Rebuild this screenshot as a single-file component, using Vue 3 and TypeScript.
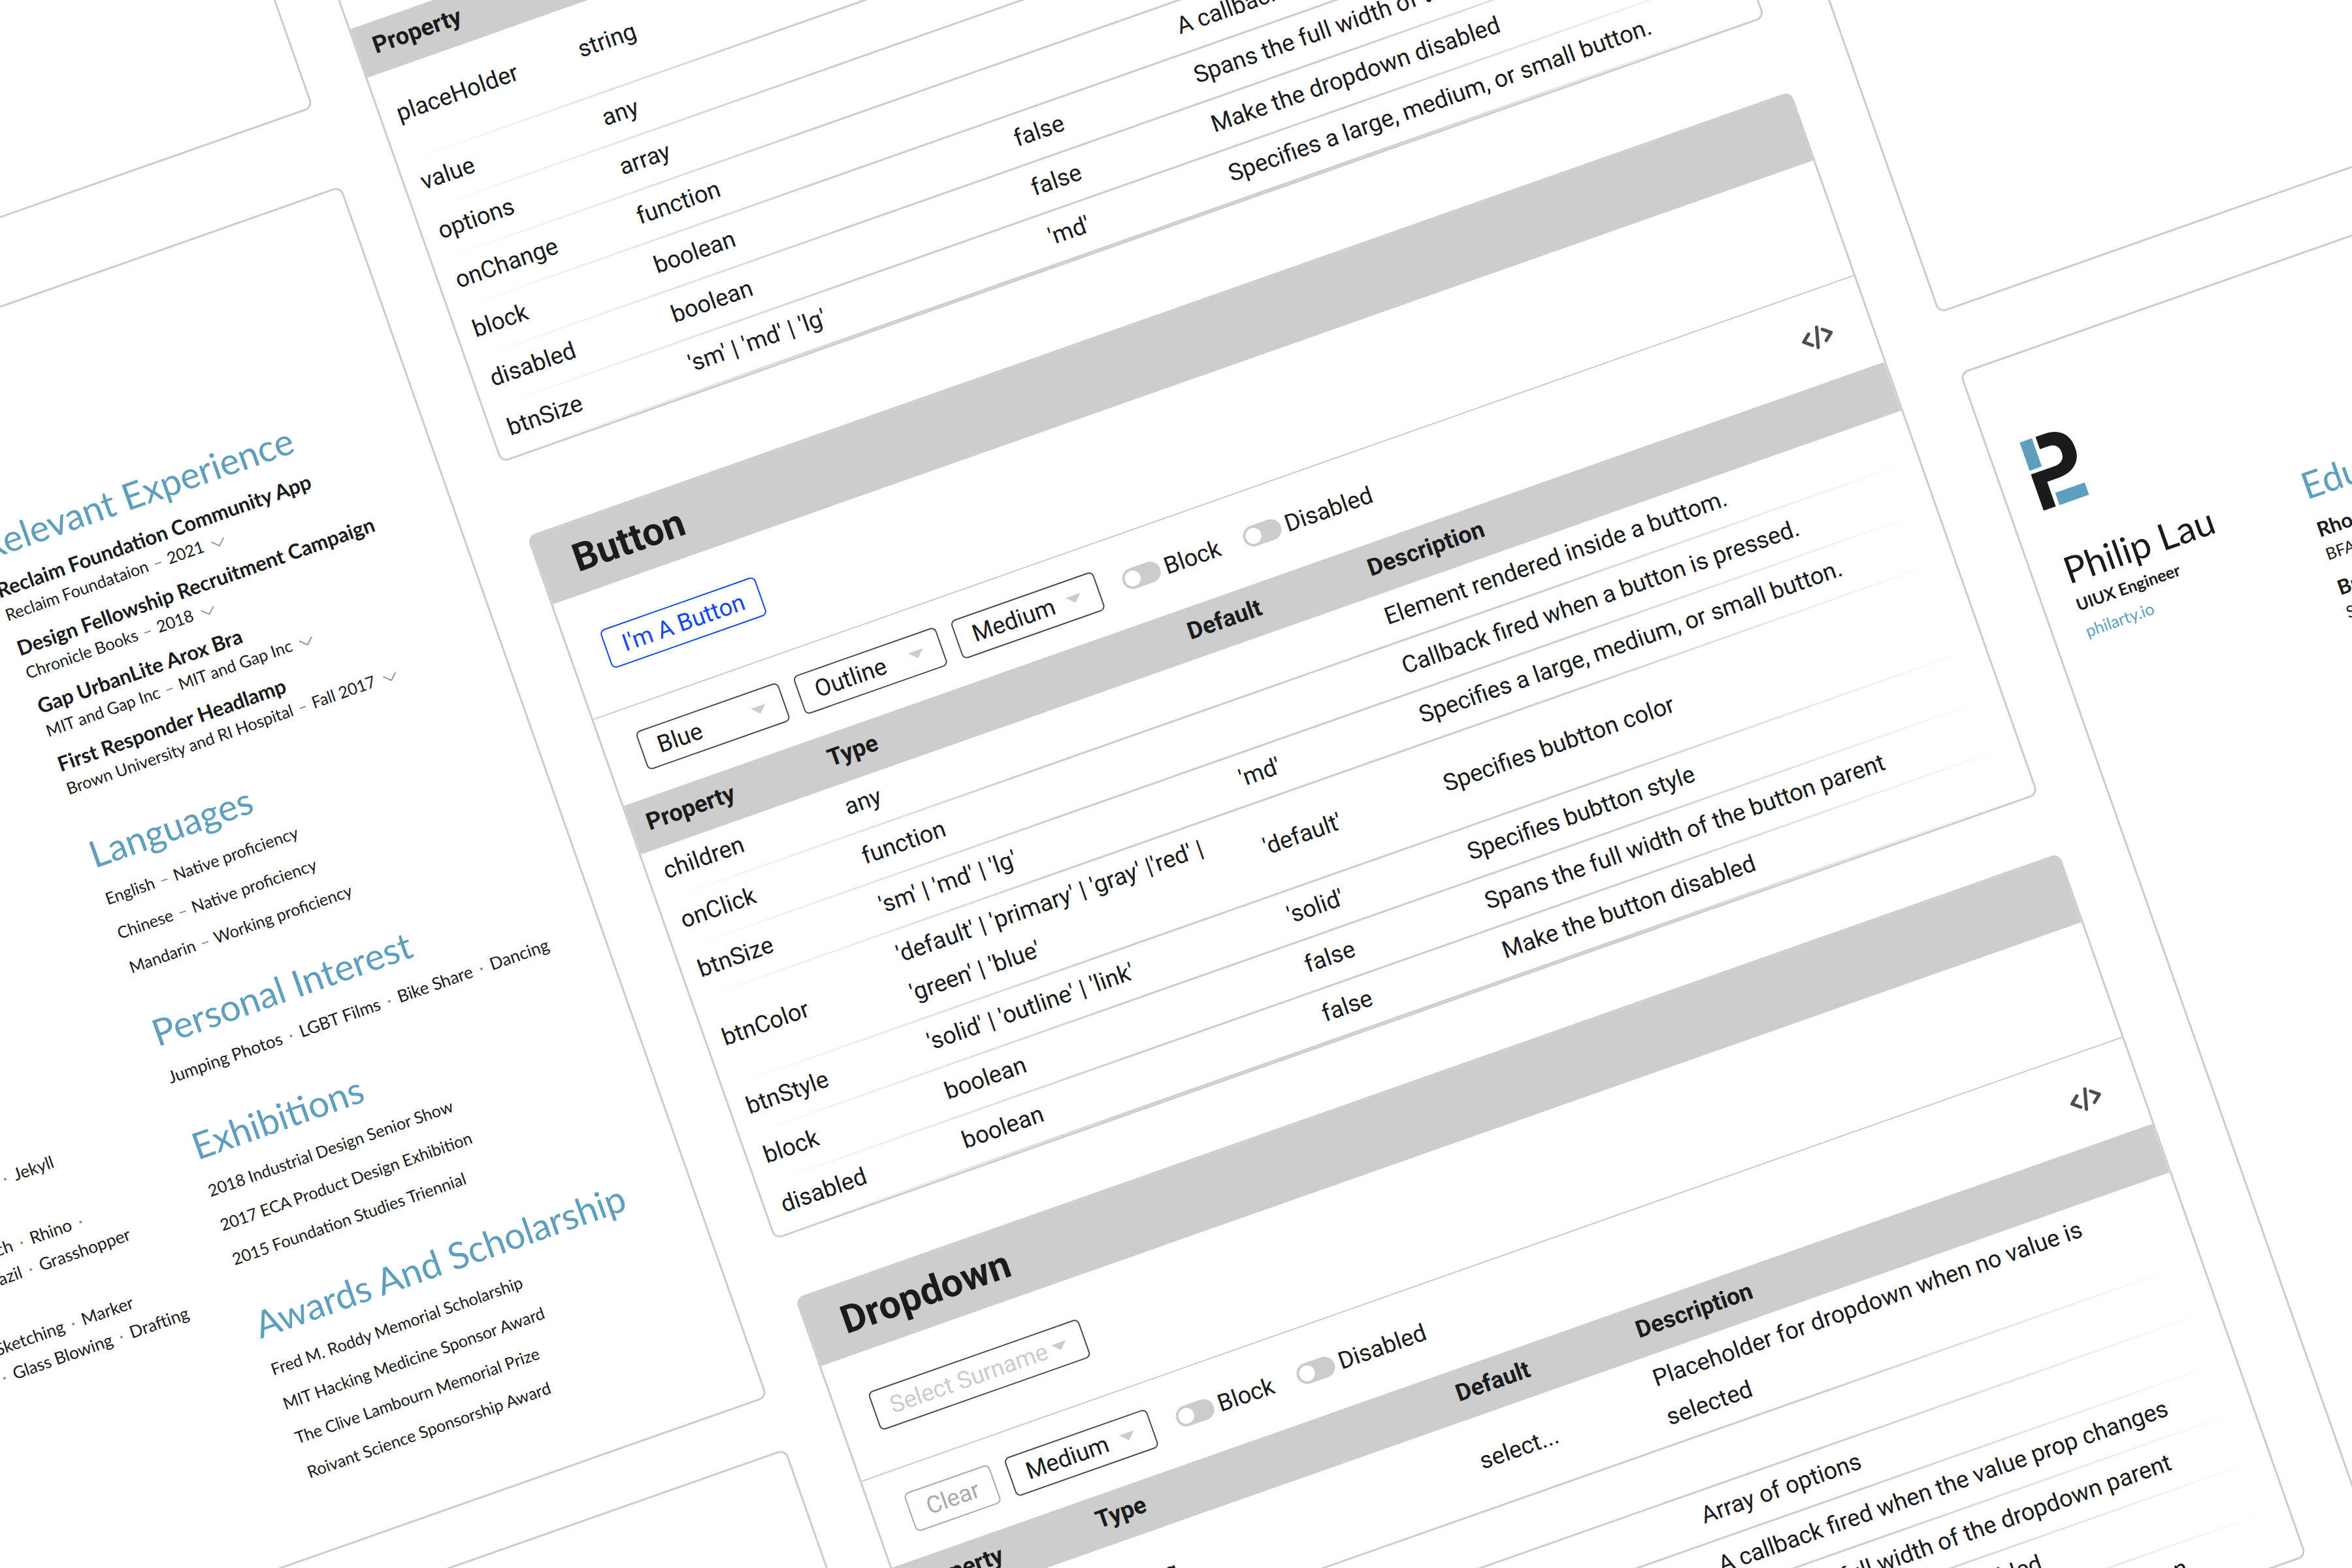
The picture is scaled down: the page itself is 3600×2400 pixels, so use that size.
<script setup lang="ts">
interface PropRow {
  name: string
  type: string
  initial: string
  description: string
}

interface ComponentDoc {
  key: string
  title: string
  demo: 'button' | 'dropdown'
  selects: string[]
  clearable: boolean
  rows: PropRow[]
}

interface Job {
  title: string
  org: string
  date: string
}

const dropdownRows: PropRow[] = [
  { name: 'placeHolder', type: 'string', initial: 'select...', description: 'Placeholder for dropdown when no value is selected' },
  { name: 'value', type: 'any', initial: '', description: '' },
  { name: 'options', type: 'array', initial: '', description: 'Array of options' },
  { name: 'onChange', type: 'function', initial: '', description: 'A callback fired when the value prop changes' },
  { name: 'block', type: 'boolean', initial: 'false', description: 'Spans the full width of the dropdown parent' },
  { name: 'disabled', type: 'boolean', initial: 'false', description: 'Make the dropdown disabled' },
  { name: 'btnSize', type: "'sm' | 'md' | 'lg'", initial: "'md'", description: 'Specifies a large, medium, or small button.' },
]

const buttonRows: PropRow[] = [
  { name: 'children', type: 'any', initial: '', description: 'Element rendered inside a buttom.' },
  { name: 'onClick', type: 'function', initial: '', description: 'Callback fired when a button is pressed.' },
  { name: 'btnSize', type: "'sm' | 'md' | 'lg'", initial: "'md'", description: 'Specifies a large, medium, or small button.' },
  { name: 'btnColor', type: "'default' | 'primary' | 'gray' |'red' | 'green' | 'blue'", initial: "'default'", description: 'Specifies bubtton color' },
  { name: 'btnStyle', type: "'solid' | 'outline' | 'link'", initial: "'solid'", description: 'Specifies bubtton style' },
  { name: 'block', type: 'boolean', initial: 'false', description: 'Spans the full width of the button parent' },
  { name: 'disabled', type: 'boolean', initial: 'false', description: 'Make the button disabled' },
]

const docs: ComponentDoc[] = [
  { key: 'first', title: 'Dropdown', demo: 'dropdown', selects: ['Medium'], clearable: true, rows: dropdownRows },
  { key: 'second', title: 'Button', demo: 'button', selects: ['Blue', 'Outline', 'Medium'], clearable: false, rows: buttonRows },
  { key: 'third', title: 'Dropdown', demo: 'dropdown', selects: ['Medium'], clearable: true, rows: dropdownRows },
]

const jobs: Job[] = [
  { title: 'Reclaim Foundation Community App', org: 'Reclaim Foundataion', date: '2021' },
  { title: 'Design Fellowship Recruitment Campaign', org: 'Chronicle Books', date: '2018' },
  { title: 'Gap UrbanLite Arox Bra', org: 'MIT and Gap Inc', date: 'MIT and Gap Inc' },
  { title: 'First Responder Headlamp', org: 'Brown University and RI Hospital', date: 'Fall 2017' },
]

const languages = [
  { name: 'English', level: 'Native proficiency' },
  { name: 'Chinese', level: 'Native proficiency' },
  { name: 'Mandarin', level: 'Working proficiency' },
]

const interests = ['Jumping Photos', 'LGBT Films', 'Bike Share', 'Dancing']

const exhibitions = [
  '2018 Industrial Design Senior Show',
  '2017 ECA Product Design Exhibition',
  '2015 Foundation Studies Triennial',
]

const awards = [
  'Fred M. Roddy Memorial Scholarship',
  'MIT Hacking Medicine Sponsor Award',
  'The Clive Lambourn Memorial Prize',
  'Roivant Science Sponsorship Award',
]

/* rest: free space left at the end of each ragged line */
const skills = [
  [{ words: ['', 'Jekyll'], rest: 117 }],
  [
    { words: ['Sketch', 'Rhino', ''], rest: 94 },
    { words: ['Brazil', 'Grasshopper'], rest: 44 },
  ],
  [
    { words: ['Sketching', 'Marker'], rest: 74 },
    { words: ['', 'Glass Blowing', 'Drafting'], rest: 0 },
  ],
]

const schools = [
  { name: 'Rhode Island School of Design', degree: 'BFA' },
  { name: 'Brown University', degree: 'S' },
]
</script>

<template>
  <main class="stage">
    <div class="board">
      <div class="column">
        <section class="card blank-short"></section>

        <section class="card resume">
          <div class="skills">
            <div v-for="(group, g) in skills" :key="g" class="skill-group">
              <p v-for="(line, l) in group" :key="l" :style="{ paddingRight: line.rest + 'px' }">
                <template v-for="(word, w) in line.words" :key="w"><i v-if="w > 0" class="dot">·</i>{{ word }}</template>
              </p>
            </div>
          </div>

          <div class="history">
            <section>
              <h2>Relevant Experience</h2>
              <article v-for="job in jobs" :key="job.title" class="entry">
                <h3>{{ job.title }}</h3>
                <p>
                  {{ job.org }} <i class="dash">–</i> {{ job.date }}
                  <svg class="chevron" viewBox="0 0 22 12" aria-hidden="true"><path d="M1 1L11 10.500L21 1" /></svg>
                </p>
              </article>
            </section>
            <section>
              <h2>Languages</h2>
              <ul>
                <li v-for="language in languages" :key="language.name">{{ language.name }} <i class="dash">–</i> {{ language.level }}</li>
              </ul>
            </section>
            <section>
              <h2>Personal Interest</h2>
              <p class="interests">
                <template v-for="(interest, n) in interests" :key="interest"><i v-if="n > 0" class="dot">·</i>{{ interest }}</template>
              </p>
            </section>
            <section>
              <h2>Exhibitions</h2>
              <ul>
                <li v-for="item in exhibitions" :key="item">{{ item }}</li>
              </ul>
            </section>
            <section>
              <h2>Awards And Scholarship</h2>
              <ul>
                <li v-for="item in awards" :key="item">{{ item }}</li>
              </ul>
            </section>
          </div>
        </section>

        <section class="card blank-short next-left"></section>
      </div>

      <div class="column docs">
        <section v-for="doc in docs" :key="doc.key" class="card doc" :class="doc.key">
          <header><h2>{{ doc.title }}</h2></header>

          <div class="demo">
            <button v-if="doc.demo === 'button'" type="button" class="control blue">I'm A Button</button>
            <span v-else class="picker wide">
              <select class="control placeholder" aria-label="Surname">
                <option>Select Surname</option>
              </select>
              <svg viewBox="0 0 24 12" aria-hidden="true"><path d="M0 0H24L12 12Z" /></svg>
            </span>
          </div>

          <div class="toolbar">
            <button v-if="doc.clearable" type="button" class="control muted">Clear</button>
            <span v-for="choice in doc.selects" :key="choice" class="picker">
              <select class="control" :aria-label="choice">
                <option>{{ choice }}</option>
              </select>
              <svg viewBox="0 0 24 12" aria-hidden="true"><path d="M0 0H24L12 12Z" /></svg>
            </span>
            <label class="toggle"><input type="checkbox" />Block</label>
            <label class="toggle"><input type="checkbox" />Disabled</label>
            <button type="button" class="code" aria-label="Show code">
              <svg viewBox="0 0 50 36" aria-hidden="true">
                <path d="M14 9L3 18L14 27M36 9L47 18L36 27M29 3L21 33" />
              </svg>
            </button>
          </div>

          <table>
            <thead>
              <tr>
                <th class="narrow">Property</th>
                <th class="medium">Type</th>
                <th class="narrow">Default</th>
                <th>Description</th>
              </tr>
            </thead>
            <tbody>
              <tr v-for="row in doc.rows" :key="row.name">
                <td>{{ row.name }}</td>
                <td>{{ row.type }}</td>
                <td>{{ row.initial }}</td>
                <td>{{ row.description }}</td>
              </tr>
            </tbody>
          </table>
        </section>
      </div>

      <div class="column right">
        <section class="card blank-tall"></section>

        <section class="card profile">
          <div class="identity">
            <svg class="logo" viewBox="0 0 78 111" role="img" aria-label="PL">
              <rect width="20" height="46" class="accent" />
              <rect x="26" y="91" width="48" height="20" class="accent" />
              <path d="M26 0H41C66 0 78 15 78 36C78 57 64 71 38 71H20V111H0V52H38C51 52 56 45 56 36C56 26 51 20 40 20H26Z" />
            </svg>
            <h1>Philip Lau</h1>
            <p class="role">UIUX Engineer</p>
            <p><a href="#philarty">philarty.io</a></p>
          </div>
          <div class="history">
            <section>
              <h2>Education</h2>
              <article v-for="school in schools" :key="school.name" class="entry">
                <h3>{{ school.name }}</h3>
                <p>{{ school.degree }}</p>
              </article>
            </section>
          </div>
        </section>
      </div>
    </div>
  </main>
</template>

<style>
body {
  margin: 0;
  background: #fff;
}
</style>

<style scoped>
.stage {
  height: 100vh;
  overflow: hidden;
  background: #fff;
  color: #1a1b1c;
  text-rendering: geometricPrecision;
}

.stage *,
.stage *::before {
  box-sizing: border-box;
}

h1,
h2,
h3,
p,
ul {
  margin: 0;
  padding: 0;
  list-style: none;
}

/* the whole sheet is tilted and zoomed around the window's top left corner */
.board {
  display: grid;
  grid-template-columns: repeat(3, 56.4vw);
  column-gap: 89px;
  align-items: start;
  margin: -1000px 0 0 -1636px;
  transform: rotate(-19.4deg) scale(1.01);
  transform-origin: 1636px 1000px;
}

.docs {
  padding-top: 784px;
}

.right {
  width: 64vw;
  padding-left: 10px;
}

.card {
  border: 3px solid #cdcdcd;
  border-radius: 13px;
  background: #fff;
  overflow: hidden;
}

.blank-short {
  min-height: 1312px;
}

.blank-tall {
  min-height: 2424px;
}

.resume {
  margin-top: 125px;
}

.next-left {
  margin-top: 82px;
}

/* component documentation */
.doc {
  background: linear-gradient(#cdcdcd, #cdcdcd) top / 100% 60px no-repeat border-box, #fff;
  font-family: Roboto, "Liberation Sans", sans-serif;
  font-size: 36px;
  line-height: 62px;
}

.second {
  margin-top: 118px;
}

.third {
  margin-top: 94px;
}

.doc header {
  height: 107px;
  padding: 22px 52px 0;
  background: #cdcdcd;
}

.doc h2 {
  font-size: 59px;
  line-height: 66px;
  font-weight: 700;
}

.demo,
.toolbar {
  display: flex;
  align-items: center;
  gap: 24px;
  padding: 0 53px;
}

.demo {
  height: 186px;
  border-bottom: 2px solid #cdcdcd;
}

.toolbar {
  height: 138px;
}

.control {
  height: 62px;
  margin: 0;
  padding: 0 24px;
  border: 2px solid #4d4d4d;
  border-radius: 8px;
  background: #fff;
  color: #1a1b1c;
  font-family: inherit;
  font-size: 36px;
  line-height: 58px;
  appearance: none;
}

.blue,
.muted {
  padding: 0 25px;
}

.blue {
  border-color: #1448f0;
  color: #1448f0;
}

.muted {
  border-color: #aaa;
  color: #aaa;
}

.placeholder {
  color: #ccc;
}

.picker {
  display: grid;
  align-items: center;
  justify-items: end;
  width: 229px;
}

.picker.wide {
  width: 338px;
}

.picker > * {
  grid-area: 1 / 1;
}

.picker select {
  width: 100%;
}

.picker svg {
  width: 24px;
  height: 12px;
  margin-right: 28px;
  fill: #ccc;
  pointer-events: none;
}

.toggle {
  display: flex;
  align-items: center;
  gap: 7px;
  margin-left: 14px;
}

.toggle input {
  display: flex;
  align-items: center;
  width: 60px;
  height: 32px;
  margin: 0;
  padding: 4px;
  border-radius: 16px;
  background: #ccc;
  appearance: none;
}

.toggle input::before {
  content: "";
  width: 24px;
  height: 24px;
  border-radius: 50%;
  background: #fff;
}

.toggle input:checked {
  justify-content: flex-end;
}

.code {
  display: flex;
  margin-left: auto;
  padding: 0 5px;
  border: 0;
  background: none;
}

.code svg {
  width: 50px;
  height: 36px;
  fill: none;
  stroke: #4d4d4d;
  stroke-width: 5;
  stroke-linecap: round;
  stroke-linejoin: round;
}

/* the head's fill is painted by the table so that it runs unbroken under its cells */
table {
  width: 100%;
  table-layout: fixed;
  border-collapse: collapse;
  background: linear-gradient(#cdcdcd, #cdcdcd) top / 100% 78px no-repeat;
}

.narrow {
  width: 14.29%;
}

.medium {
  width: 28.57%;
}

th,
td {
  padding: 5px 26px 12px;
  text-align: left;
  vertical-align: middle;
}

th {
  padding-bottom: 11px;
  font-weight: 700;
}

th:first-child,
td:first-child {
  padding-left: 24px;
}

tbody tr {
  background: linear-gradient(90deg, transparent 1%, #cdcdcd 30%, #cdcdcd 70%, transparent 99%) bottom / 100% 3px no-repeat;
}

/* resume */
.resume,
.profile {
  font-family: Lato, "Liberation Sans", sans-serif;
  font-size: 25px;
}

.resume {
  display: grid;
  grid-template-columns: 1fr 693px;
  column-gap: 90px;
  align-items: end;
  padding: 304px 0 93px;
}

i {
  color: #888;
  font-style: normal;
}

.dot {
  margin: 0 11px;
}

.dash {
  margin: 0 2px;
}

.skills {
  padding-bottom: 296px;
  font-size: 26px;
  text-align: right;
  line-height: 43px;
}

.skill-group + .skill-group {
  margin-top: 56px;
}

.history section + section {
  margin-top: 48px;
}

.history h2 {
  margin-bottom: 14px;
  color: #5d9fbc;
  font-size: 56px;
  line-height: 60px;
  font-weight: 400;
}

.entry {
  padding: 5px 0 8px;
  line-height: 40px;
}

.entry h3 {
  font-size: 31px;
  font-weight: 700;
}

.chevron {
  width: 22px;
  height: 12px;
  margin-left: 6px;
  fill: none;
  stroke: #999;
  stroke-width: 2;
}

.history li {
  line-height: 55px;
}

.interests {
  padding: 5px 0 12px;
  font-size: 26px;
  line-height: 43px;
}

.profile {
  display: grid;
  grid-template-columns: 382px 1fr;
  min-height: 2000px;
  margin-top: 95px;
  padding-left: 48px;
}

.identity {
  padding-top: 127px;
  line-height: 42px;
}

.logo {
  display: block;
  width: 77px;
  height: 110px;
  fill: #1a1b1c;
}

.logo .accent {
  fill: #5d9fbc;
}

h1 {
  margin: 67px 0 4px;
  font-size: 56px;
  line-height: 60px;
  font-weight: 400;
}

.role {
  font-weight: 700;
}

.identity a {
  color: #5d9fbc;
  text-decoration: none;
}

.profile .history {
  padding-top: 303px;
}
</style>
